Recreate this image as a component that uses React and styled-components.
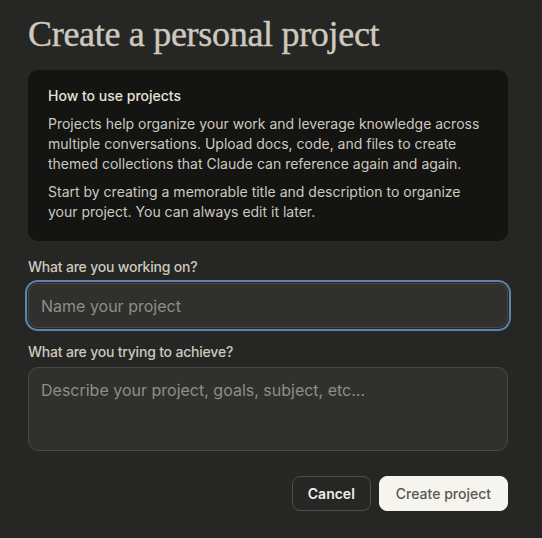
import React from 'react';
import styled, { createGlobalStyle } from 'styled-components';

const GlobalStyle = createGlobalStyle`
  html, body {
    margin: 0;
    background: #262624;
  }
  body {
    font-family: Inter, "Liberation Sans", sans-serif;
    -webkit-font-smoothing: antialiased;
  }
`;

const Page = styled.div`
  width: 480px;
  padding: 14px 0 26px 28px;
  display: flex;
  flex-direction: column;
`;

const Title = styled.h1`
  margin: 0 0 16px;
  font-family: "Liberation Serif", serif;
  font-weight: 400;
  font-size: 36px;
  line-height: 40px;
  color: #cdc9bf;
  letter-spacing: -0.3px;
  -webkit-text-stroke: 0.4px #cdc9bf;
`;

const InfoBox = styled.section`
  background: #141413;
  border-radius: 10px;
  padding: 16px 20px 19px;
  display: flex;
  flex-direction: column;
  gap: 8px;
`;

const InfoHeading = styled.h2`
  margin: 0;
  font-size: 14px;
  font-weight: 500;
  line-height: 20px;
  color: #e6e2d8;
`;

const InfoText = styled.p`
  margin: 0;
  font-size: 14px;
  line-height: 20px;
  color: #cdc9bf;
`;

const Field = styled.label`
  display: flex;
  flex-direction: column;
  gap: ${(p) => p.$gap}px;
  margin-top: ${(p) => p.$top}px;
`;

const Label = styled.span`
  font-size: 14px;
  font-weight: 500;
  line-height: 20px;
  letter-spacing: -0.2px;
  color: #cdc9bf;
`;

const inputBase = `
  box-sizing: border-box;
  width: 100%;
  background: #30302e;
  border: 1px solid #494845;
  border-radius: 10px;
  color: #e6e2d8;
  font-family: Inter, "Liberation Sans", sans-serif;
  font-size: 16px;
  padding: 0 12px;
  outline: none;
  &::placeholder { color: #8f8d86; }
`;

const TextInput = styled.input`
  ${inputBase}
  height: 45px;
  box-shadow: 0 0 0 1px #262624, 0 0 0 3px #5b84b1;
`;

const TextArea = styled.textarea`
  ${inputBase}
  height: 84px;
  padding-top: 10px;
  resize: none;
  line-height: 24px;
`;

const Actions = styled.div`
  display: flex;
  justify-content: flex-end;
  gap: 8px;
  margin-top: 25px;
`;

const Button = styled.button`
  height: 35px;
  padding: 0 ${(p) => (p.$primary ? 16 : 15)}px;
  border-radius: 8px;
  font-family: Inter, "Liberation Sans", sans-serif;
  font-size: 14px;
  font-weight: ${(p) => (p.$primary ? 500 : 600)};
  cursor: pointer;
  background: ${(p) => (p.$primary ? '#f6f4ee' : 'transparent')};
  color: ${(p) => (p.$primary ? '#5a5853' : '#f2efe8')};
  border: 1px solid ${(p) => (p.$primary ? '#f6f4ee' : '#4f4e4a')};
`;

export default function App() {
  return (
    <>
      <GlobalStyle />
      <Page>
        <Title>Create a personal project</Title>
        <InfoBox>
          <InfoHeading>How to use projects</InfoHeading>
          <InfoText>
            Projects help organize your work and leverage knowledge across multiple conversations.
            Upload docs, code, and files to create themed collections that Claude can reference
            again and again.
          </InfoText>
          <InfoText>
            Start by creating a memorable title and description to organize your project. You can
            always edit it later.
          </InfoText>
        </InfoBox>
        <Field $top={16} $gap={6}>
          <Label>What are you working on?</Label>
          <TextInput placeholder="Name your project" />
        </Field>
        <Field $top={14} $gap={5}>
          <Label>What are you trying to achieve?</Label>
          <TextArea placeholder="Describe your project, goals, subject, etc..." />
        </Field>
        <Actions>
          <Button>Cancel</Button>
          <Button $primary>Create project</Button>
        </Actions>
      </Page>
    </>
  );
}
